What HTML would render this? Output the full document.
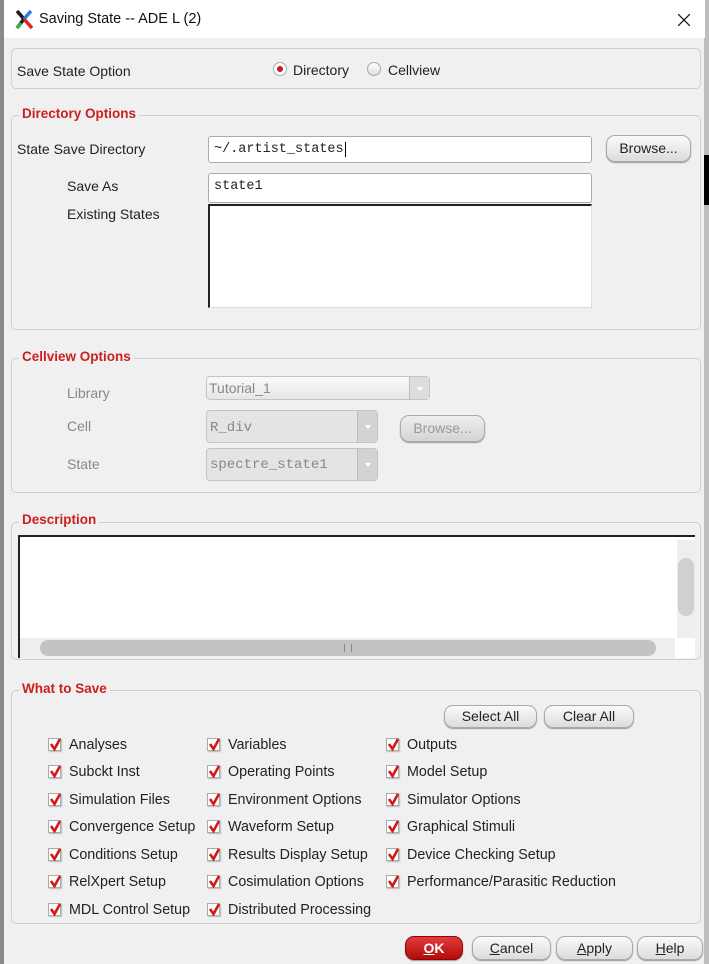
<!DOCTYPE html>
<html><head><meta charset="utf-8"><style>
*{box-sizing:border-box;margin:0;padding:0}
body{width:709px;height:964px;overflow:hidden;background:#8a8a8a;font-family:"Liberation Sans",sans-serif;font-size:14px;color:#222;position:relative}
.abs{position:absolute}
.win{position:absolute;left:3px;top:0;width:701px;height:964px;background:#f0f0f0;border-left:1px solid #888}
.title{position:absolute;left:0;top:0;width:701px;height:38px;background:#fff}
.grp{position:absolute;border:1px solid #cfcfcf;border-radius:5px}
.gt{position:absolute;color:#cc1f1f;font-weight:bold;background:#f0f0f0;padding:0 3px;font-size:13.5px}
.t{position:absolute;white-space:nowrap}
.inp{position:absolute;background:#fff;border:1px solid #aaa;border-radius:3px;font-family:"Liberation Mono",monospace;font-size:13.5px;padding:5px 5px}
.btn{position:absolute;border:1px solid #a9a9a9;border-radius:9px;background:linear-gradient(#fafafa,#dcdcdc);text-align:center;box-shadow:0 1px 1px #999;font-size:14px}
.combo{position:absolute;border:1px solid #c4c4c4;border-radius:4px;background:#e4e4e4;color:#888;font-family:"Liberation Mono",monospace;padding:6px 3px}
.combo .ar{position:absolute;right:0;top:0;bottom:0;width:20px;background:#d3d3d3;border-left:1px solid #bbb}
.combo .ar:after{content:"";position:absolute;left:7px;top:45%;border:3px solid transparent;border-top:4px solid #fff}
.cb{position:absolute;width:13px;height:13px;border:1px solid #aaa;background:#fff;box-shadow:1px 1px 1px #bbb}
.cb svg{position:absolute;left:0;top:-1px}
.lbl{position:absolute;white-space:nowrap;font-size:14.3px}
</style></head><body>
<div class="abs" style="left:704px;top:0;width:5px;height:964px;background:#bdbdbd"></div>
<div class="abs" style="left:704px;top:155px;width:5px;height:50px;background:#000"></div>
<div class="win">
<div class="title">
<svg class="abs" style="left:11px;top:10px" width="19" height="19" viewBox="0 0 19 19"><path d="M2 1 L9 9 L2 18" stroke="#1a1a1a" stroke-width="3.5" fill="none"/><path d="M16 1 L9 9" stroke="#2a7ee8" stroke-width="3.5"/><path d="M9 9 L17 18" stroke="#d8262a" stroke-width="3.5"/><path d="M2 18 L6 13" stroke="#2db34a" stroke-width="3.5"/></svg>
<div class="t" style="left:35px;top:11px;font-size:14.5px;color:#111">Saving State -- ADE L (2)</div>
<svg class="abs" style="left:674px;top:14px" width="12" height="12"><path d="M0 0L12 12M12 0L0 12" stroke="#111" stroke-width="1.2"/></svg>
</div>
<div class="grp" style="left:7px;top:48px;width:690px;height:41px"></div>
<div class="t" style="left:13px;top:63px">Save State Option</div>
<div class="abs" style="left:269px;top:62px;width:14px;height:14px;border-radius:50%;border:1px solid #aaa;background:#fff"><div class="abs" style="left:3px;top:3px;width:6px;height:6px;border-radius:50%;background:#d01818"></div></div>
<div class="t" style="left:289px;top:62px">Directory</div>
<div class="abs" style="left:363px;top:62px;width:14px;height:14px;border-radius:50%;border:1px solid #aaa;background:linear-gradient(#fff,#ddd)"></div>
<div class="t" style="left:384px;top:62px">Cellview</div>
<div class="grp" style="left:7px;top:115px;width:690px;height:215px"></div>
<div class="gt" style="left:15px;top:106px">Directory Options</div>
<div class="t" style="left:13px;top:141px">State Save Directory</div>
<div class="inp" style="left:204px;top:136px;width:384px;height:27px">~/.artist_states<span style="border-left:1px solid #000;margin-left:1px"></span></div>
<div class="btn" style="left:602px;top:135px;width:85px;height:27px;line-height:25px">Browse...</div>
<div class="t" style="left:63px;top:178px">Save As</div>
<div class="inp" style="left:204px;top:173px;width:384px;height:30px">state1</div>
<div class="t" style="left:63px;top:206px">Existing States</div>
<div class="abs" style="left:204px;top:204px;width:384px;height:104px;background:#fff;border-top:2px solid #222;border-left:2px solid #222;border-right:1px solid #ddd;border-bottom:1px solid #ddd"></div>
<div class="grp" style="left:7px;top:358px;width:690px;height:135px"></div>
<div class="gt" style="left:15px;top:349px">Cellview Options</div>
<div class="t" style="left:63px;top:385px;color:#888">Library</div>
<div class="combo" style="left:202px;top:376px;width:224px;height:24px;background:linear-gradient(#fafafa,#e6e6e6);font-family:'Liberation Sans',sans-serif;padding:3px 2px">Tutorial_1<div class="ar" style="background:#ddd"></div></div>
<div class="t" style="left:63px;top:418px;color:#888">Cell</div>
<div class="combo" style="left:202px;top:410px;width:172px;height:33px;padding-top:9px">R_div<div class="ar"></div></div>
<div class="btn" style="left:396px;top:415px;width:85px;height:27px;line-height:25px;color:#999;background:linear-gradient(#eee,#d4d4d4)">Browse...</div>
<div class="t" style="left:63px;top:456px;color:#888">State</div>
<div class="combo" style="left:202px;top:448px;width:172px;height:33px;padding-top:8px">spectre_state1<div class="ar"></div></div>
<div class="grp" style="left:7px;top:522px;width:690px;height:138px"></div>
<div class="gt" style="left:15px;top:512px">Description</div>
<div class="abs" style="left:14px;top:535px;width:677px;height:123px;background:#fff;border-top:2px solid #222;border-left:2px solid #222"></div>
<div class="abs" style="left:673px;top:540px;width:18px;height:98px;background:#eee"></div>
<div class="abs" style="left:674px;top:558px;width:16px;height:58px;background:#d0d0d0;border-radius:8px"></div>
<div class="abs" style="left:16px;top:638px;width:655px;height:20px;background:#eee"></div>
<div class="abs" style="left:36px;top:640px;width:616px;height:16px;background:#c2c2c2;border-radius:8px"></div>
<div class="abs" style="left:340px;top:644px;width:8px;height:8px;border-left:1px solid #888;border-right:1px solid #888"></div>
<div class="grp" style="left:7px;top:690px;width:690px;height:234px"></div>
<div class="gt" style="left:15px;top:681px">What to Save</div>
<div class="btn" style="left:440px;top:705px;width:93px;height:23px;line-height:21px">Select All</div>
<div class="btn" style="left:540px;top:705px;width:90px;height:23px;line-height:21px">Clear All</div>
<div id="cbs"></div>
<div class="btn" style="left:401px;top:936px;width:58px;height:24px;line-height:22px;background:linear-gradient(#e23b3b,#b00c0c);color:#fff;font-weight:bold;border-color:#900"><u>O</u>K</div>
<div class="btn" style="left:468px;top:936px;width:79px;height:24px;line-height:22px"><u>C</u>ancel</div>
<div class="btn" style="left:552px;top:936px;width:77px;height:24px;line-height:22px"><u>A</u>pply</div>
<div class="btn" style="left:633px;top:936px;width:66px;height:24px;line-height:22px"><u>H</u>elp</div>
</div>
<script>
var cols=[[44,["Analyses","Subckt Inst","Simulation Files","Convergence Setup","Conditions Setup","RelXpert Setup","MDL Control Setup"]],[203,["Variables","Operating Points","Environment Options","Waveform Setup","Results Display Setup","Cosimulation Options","Distributed Processing"]],[382,["Outputs","Model Setup","Simulator Options","Graphical Stimuli","Device Checking Setup","Performance/Parasitic Reduction"]]];
var ys=[738,765,793,820,848,875,903],h="";
cols.forEach(function(c){c[1].forEach(function(t,i){var y=ys[i];
h+='<div class="cb" style="left:'+c[0]+'px;top:'+y+'px"><svg width="13" height="14"><path d="M2 6 L5.5 11 L11 1" stroke="#d41818" stroke-width="2.6" fill="none"/></svg></div><div class="lbl" style="left:'+(c[0]+21)+'px;top:'+(y-1)+'px">'+t+'</div>';});});
document.getElementById("cbs").innerHTML=h;
</script>
</body></html>
